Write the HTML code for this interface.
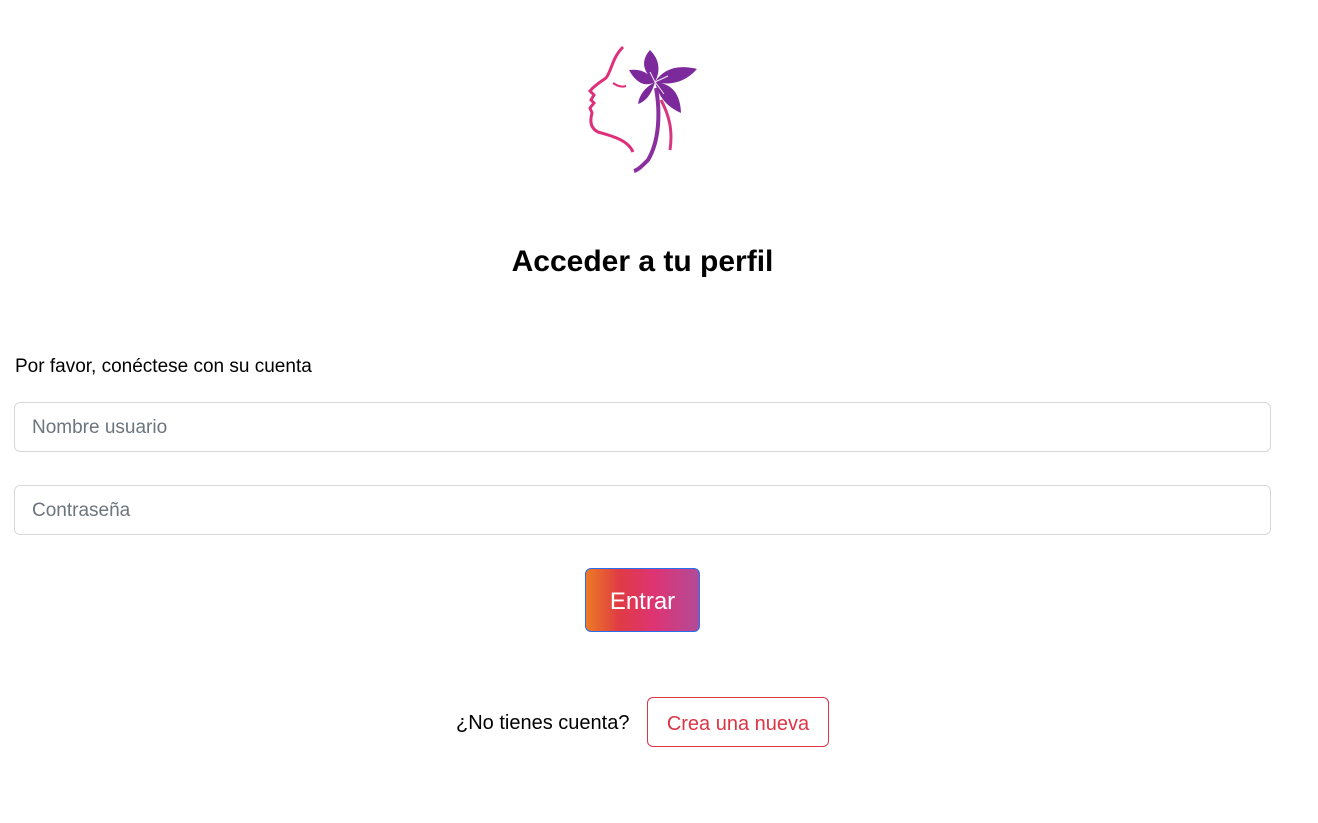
<!DOCTYPE html>
<html><head><meta charset="utf-8"><style>
body{margin:0;background:#fff;font-family:"Liberation Sans",sans-serif;width:1318px;height:823px;position:relative;color:#000}
h1{position:absolute;top:242px;left:0;width:1285px;text-align:center;margin:0;font-size:30px;font-weight:bold;line-height:40px}
.lbl{position:absolute;left:15px;top:356px;font-size:19px}
.in{position:absolute;left:14px;width:1257px;height:50px;border:1px solid #d6d8db;border-radius:6px;box-sizing:border-box;padding-left:17px;font-size:19px;color:#6c757d;line-height:50px}
.btn{position:absolute;left:585px;top:568px;width:115px;height:64px;box-sizing:border-box;border:1px solid #2a6ef0;border-radius:6px;background:linear-gradient(90deg,#ec7a24 0%,#df3a45 30%,#de3473 60%,#b24b97 100%);color:#fff;font-size:24px;text-align:center;line-height:66px}
.q{position:absolute;left:456px;top:712px;font-size:20px}
.cr{position:absolute;left:647px;top:697px;width:182px;height:50px;box-sizing:border-box;border:1px solid #dc3545;border-radius:6px;color:#dc3545;font-size:20px;text-align:center;line-height:52px}
</style></head><body>
<svg style="position:absolute;left:0;top:0" width="1318" height="200">
<path d="M623,47 C612,58 612,70 606,78 C600,82 594,86 590,91 L594,95 L591,100 L594,103 L590,108 L592,113 C590,120 590,128 598,132 C612,136 628,140 633,152" fill="none" stroke="#df2f7a" stroke-width="3"/>
<path d="M613,83 Q620,88 626,86" fill="none" stroke="#df2f7a" stroke-width="2"/>
<g fill="#7c2a9b">
<path d="M655,82 Q636,66 650,50 Q664,64 655,82 Z"/>
<path d="M655,82 Q668,62 697,69 Q680,88 655,82 Z"/>
<path d="M655,82 Q680,84 681,113 Q660,104 655,82 Z"/>
<path d="M655,82 Q650,100 638,104 Q640,90 655,82 Z"/>
<path d="M655,82 Q640,90 629,70 Q646,68 655,82 Z"/>
</g>
<path d="M655,82 L650,72 M655,82 L668,76 M655,82 L664,94" stroke="#f4e8f7" stroke-width="1"/>
<path d="M656,88 C660,110 660,140 648,160 C642,166 638,170 634,171" fill="none" stroke="#8a2f9e" stroke-width="4"/>
<path d="M661,100 C669,115 673,130 670,150" fill="none" stroke="#d8377f" stroke-width="3"/>
</svg>
<h1>Acceder a tu perfil</h1>
<div class="lbl">Por favor, conéctese con su cuenta</div>
<div class="in" style="top:402px">Nombre usuario</div>
<div class="in" style="top:485px">Contraseña</div>
<div class="btn">Entrar</div>
<div class="q">¿No tienes cuenta?</div>
<div class="cr">Crea una nueva</div>
</body></html>
